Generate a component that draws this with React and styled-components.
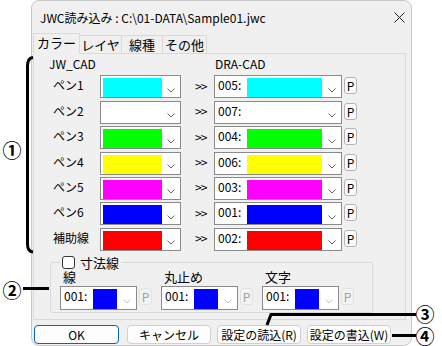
import React from 'react';
import styled, { createGlobalStyle } from 'styled-components';

const GlobalStyle = createGlobalStyle`
  html, body { margin: 0; padding: 0; background: #fff; }
  body { font-family: "Noto Sans CJK JP", "Noto Sans", sans-serif; color: #000; }
  * { box-sizing: border-box; }
`;

const Stage = styled.div`
  position: relative;
  width: 442px;
  height: 346px;
  overflow: hidden;
  padding-left: 31px;
`;

const Window = styled.div`
  width: 381px;
  height: 346px;
  background: #f0f0f0;
  border: 1px solid #c9c9c9;
  border-radius: 8px;
  display: flex;
  flex-direction: column;
`;

const TitleBar = styled.div`
  height: 32px;
  display: flex;
  align-items: center;
  justify-content: space-between;
  padding: 0 6px 0 8px;
  font-size: 12px;
`;

const Tabs = styled.div`
  display: flex;
  align-items: flex-end;
  height: 21px;
  padding-left: 1px;
  margin-bottom: -1px;
  position: relative;
  z-index: 1;
`;

const Tab = styled.div`
  width: ${p => p.$w}px;
  height: ${p => (p.$active ? 21 : 18)}px;
  margin-bottom: ${p => (p.$active ? 0 : 1)}px;
  border: 1px solid #d9d9d9;
  border-bottom: ${p => (p.$active ? '1px solid #f0f0f0' : 'none')};
  margin-left: ${p => (p.$active ? 0 : -1)}px;
  background: #f0f0f0;
  font-size: 13px;
  line-height: ${p => (p.$active ? 18 : 17)}px;
  text-align: center;
`;

const Panel = styled.div`
  margin: 0 5px 0 1px;
  height: 267px;
  border: 1px solid #d9d9d9;
  background: #f0f0f0;
  display: flex;
  flex-direction: column;
`;

const ColorTable = styled.div`
  display: grid;
  grid-template-columns: 47px 81px 33px 128px 15px;
  grid-template-rows: 19px repeat(7, 23px);
  row-gap: 2.4px;
  padding-left: 19px;
  font-size: 12px;
`;

const Heading = styled.div`
  grid-column: ${p => p.$col};
  margin-left: ${p => p.$shift}px;
  line-height: 19px;
  font-size: 12px;
`;

const PenLabel = styled.div`
  align-self: center;
  line-height: 14px;
  margin-top: -3px;
`;

const Arrow = styled.div`
  align-self: center;
  padding-left: 14px;
  margin-top: -3px;
  font-size: 12px;
  letter-spacing: -1px;
`;

const Combo = styled.div`
  display: flex;
  align-items: flex-start;
  width: ${p => p.$w}px;
  height: ${p => p.$h || 23}px;
  border: 1px solid #8a8a8a;
  background: #fff;
  padding: 2px 0 0 2px;
`;

const Code = styled.span`
  width: 30px;
  font-size: 12px;
  line-height: 14px;
  padding-left: 1px;
`;

const Swatch = styled.div`
  width: ${p => p.$w}px;
  height: ${p => p.$h}px;
  background: ${p => p.$color};
`;

const Chevron = styled.svg`
  margin-left: auto;
  margin-right: 5px;
  align-self: center;
  margin-top: 5px;
  flex-shrink: 0;
`;

const PButton = styled.div`
  width: 13px;
  height: 17px;
  margin: 2px 0 0 2px;
  border: 1px solid ${p => (p.$off ? '#e2e2e2' : '#b4b4b4')};
  border-radius: 3px;
  background: ${p => (p.$off ? '#f3f3f3' : '#fdfdfd')};
  color: ${p => (p.$off ? '#a0a0a0' : '#000')};
  font-size: 12px;
  line-height: 15px;
  text-align: center;
`;

const Group = styled.fieldset`
  margin: 5px 0 0 16px;
  width: 310px;
  padding: 0 9px 2px 9px;
  border: 1px solid #d9d9d9;
  border-radius: 2px;
`;

const Legend = styled.legend`
  display: flex;
  align-items: center;
  gap: 5px;
  padding: 0 2px;
  font-size: 13px;
  line-height: 14px;
`;

const CheckBox = styled.span`
  width: 13px;
  height: 13px;
  border: 1px solid #333;
  border-radius: 3px;
  background: #fff;
`;

const SubRow = styled.div`
  display: flex;
`;

const SubGroup = styled.div`
  width: 101px;
  display: flex;
  flex-direction: column;
`;

const SubLabel = styled.div`
  font-size: 13px;
  line-height: 14px;
  padding-left: 3px;
  margin-bottom: 2px;
`;

const SubLine = styled.div`
  display: flex;
  align-items: flex-start;
`;

const Buttons = styled.div`
  display: flex;
  gap: 6px;
  margin-top: 5px;
  padding-left: 2px;
`;

const Button = styled.div`
  width: ${p => p.$w}px;
  height: 19px;
  margin-right: ${p => p.$mr || 0}px;
  border: 1px solid ${p => (p.$primary ? '#0067c0' : '#d0d0d0')};
  border-radius: 4px;
  background: #fdfdfd;
  font-size: 12px;
  line-height: 17px;
  text-align: center;
`;

const Overlay = styled.svg`
  position: absolute;
  left: 0;
  top: 0;
  pointer-events: none;
`;

const Num = styled.span`
  position: absolute;
  left: ${p => p.$x}px;
  top: ${p => p.$y}px;
  transform: translate(-50%, -50%);
  font-size: 19px;
  font-weight: 700;
  line-height: 1;
`;

const ChevronIcon = ({ off }) => (
  <Chevron width="8" height="5" viewBox="0 0 8 5">
    <polyline points="0.5,0.5 4,4 7.5,0.5" fill="none" stroke={off ? '#c4c4c4' : '#666'} strokeWidth="1" />
  </Chevron>
);

const pens = [
  { name: 'ペン1', color: '#00ffff', code: '005:' },
  { name: 'ペン2', color: null, code: '007:' },
  { name: 'ペン3', color: '#00ff00', code: '004:' },
  { name: 'ペン4', color: '#ffff00', code: '006:' },
  { name: 'ペン5', color: '#ff00ff', code: '003:' },
  { name: 'ペン6', color: '#0000ff', code: '001:' },
  { name: '補助線', color: '#ff0000', code: '002:' },
];

const subs = ['線', '丸止め', '文字'];

export default function App() {
  return (
    <Stage>
      <GlobalStyle />
      <Window>
        <TitleBar>
          <span>{'JWC読み込み : C:\\01-DATA\\Sample01.jwc'}</span>
          <svg width="11" height="11" viewBox="0 0 11 11">
            <path d="M0.5 0.5 L10.5 10.5 M10.5 0.5 L0.5 10.5" stroke="#222" strokeWidth="1" />
          </svg>
        </TitleBar>
        <Tabs>
          <Tab $w={47} $active>カラー</Tab>
          <Tab $w={43}>レイヤ</Tab>
          <Tab $w={42}>線種</Tab>
          <Tab $w={45}>その他</Tab>
        </Tabs>
        <Panel>
          <ColorTable>
            <Heading $col="1 / 3" $shift={-4}>JW_CAD</Heading>
            <Heading $col="4 / 6" $shift={1}>DRA-CAD</Heading>
            {pens.map(p => (
              <React.Fragment key={p.name}>
                <PenLabel>{p.name}</PenLabel>
                <Combo $w={81}>
                  {p.color && <Swatch $w={59} $h={19} $color={p.color} />}
                  <ChevronIcon />
                </Combo>
                <Arrow>&gt;&gt;</Arrow>
                <Combo $w={128}>
                  <Code>{p.code}</Code>
                  {p.color && <Swatch $w={75} $h={19} $color={p.color} />}
                  <ChevronIcon />
                </Combo>
                <PButton>P</PButton>
              </React.Fragment>
            ))}
          </ColorTable>
          <Group>
            <Legend>
              <CheckBox />
              寸法線
            </Legend>
            <SubRow>
              {subs.map(s => (
                <SubGroup key={s}>
                  <SubLabel>{s}</SubLabel>
                  <SubLine>
                    <Combo $w={77} $h={24}>
                      <Code>001:</Code>
                      <Swatch $w={24} $h={20} $color="#0000ff" />
                      <ChevronIcon off />
                    </Combo>
                    <PButton $off>P</PButton>
                  </SubLine>
                </SubGroup>
              ))}
            </SubRow>
          </Group>
        </Panel>
        <Buttons>
          <Button $w={85} $mr={2} $primary>OK</Button>
          <Button $w={84}>キャンセル</Button>
          <Button $w={84}>設定の読込(R)</Button>
          <Button $w={84}>設定の書込(W)</Button>
        </Buttons>
      </Window>
      <Overlay width="442" height="346" viewBox="0 0 442 346">
        <g fill="none" stroke="#000" strokeWidth="3">
          <path d="M33 57.5 Q27.5 58 27.5 66 L27.5 244 Q27.5 251.5 33 252" />
          <path d="M23 288.5 L49 288.5" />
          <path d="M267 325 L271 314.5 L416 314.5" />
          <path d="M392 335.5 L416 335.5" />
        </g>
      </Overlay>
      <Num $x={12} $y={149}>①</Num>
      <Num $x={12} $y={289}>②</Num>
      <Num $x={425} $y={313}>③</Num>
      <Num $x={425} $y={335}>④</Num>
    </Stage>
  );
}
